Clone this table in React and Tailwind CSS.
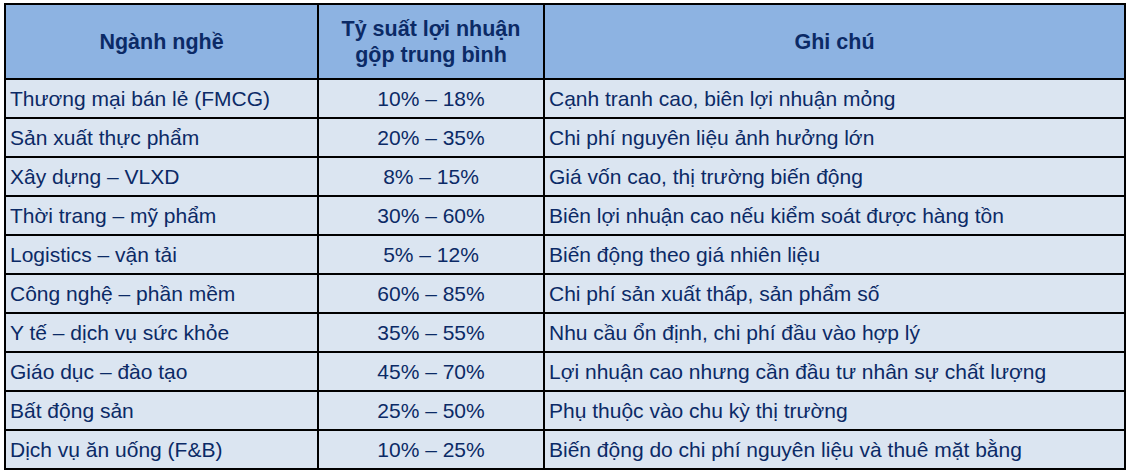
import React from "react";

const rows = [
  ["Thương mại bán lẻ (FMCG)", "10% – 18%", "Cạnh tranh cao, biên lợi nhuận mỏng"],
  ["Sản xuất thực phẩm", "20% – 35%", "Chi phí nguyên liệu ảnh hưởng lớn"],
  ["Xây dựng – VLXD", "8% – 15%", "Giá vốn cao, thị trường biến động"],
  ["Thời trang – mỹ phẩm", "30% – 60%", "Biên lợi nhuận cao nếu kiểm soát được hàng tồn"],
  ["Logistics – vận tải", "5% – 12%", "Biến động theo giá nhiên liệu"],
  ["Công nghệ – phần mềm", "60% – 85%", "Chi phí sản xuất thấp, sản phẩm số"],
  ["Y tế – dịch vụ sức khỏe", "35% – 55%", "Nhu cầu ổn định, chi phí đầu vào hợp lý"],
  ["Giáo dục – đào tạo", "45% – 70%", "Lợi nhuận cao nhưng cần đầu tư nhân sự chất lượng"],
  ["Bất động sản", "25% – 50%", "Phụ thuộc vào chu kỳ thị trường"],
  ["Dịch vụ ăn uống (F&B)", "10% – 25%", "Biến động do chi phí nguyên liệu và thuê mặt bằng"],
];

export default function App() {
  return (
    <div className="w-[1132px] h-[473px] bg-white overflow-hidden pt-[3px] pl-[4px]" style={{ fontFamily: '"Liberation Sans", Arial, sans-serif' }}>
      <table className="border-collapse text-[#0b2a66]">
        <colgroup>
          <col className="w-[313px]" />
          <col className="w-[226px]" />
          <col className="w-[581px]" />
        </colgroup>
        <thead>
          <tr className="h-[75px] bg-[#8db3e2]">
            <th className="border-2 border-black text-[21.5px] font-bold leading-[26px] text-center">Ngành nghề</th>
            <th className="border-2 border-black text-[21.5px] font-bold leading-[26px] text-center">Tỷ suất lợi nhuận<br />gộp trung bình</th>
            <th className="border-2 border-black text-[21.5px] font-bold leading-[26px] text-center">Ghi chú</th>
          </tr>
        </thead>
        <tbody>
          {rows.map((r, i) => (
            <tr key={i} className="h-[39px] bg-[#dbe5f1]">
              <td className="border-2 border-black text-[21px] leading-[24px] pl-[4px] whitespace-nowrap">{r[0]}</td>
              <td className="border-2 border-black text-[21px] leading-[24px] text-center whitespace-nowrap">{r[1]}</td>
              <td className="border-2 border-black text-[21px] leading-[24px] pl-[4px] whitespace-nowrap">{r[2]}</td>
            </tr>
          ))}
        </tbody>
      </table>
    </div>
  );
}
